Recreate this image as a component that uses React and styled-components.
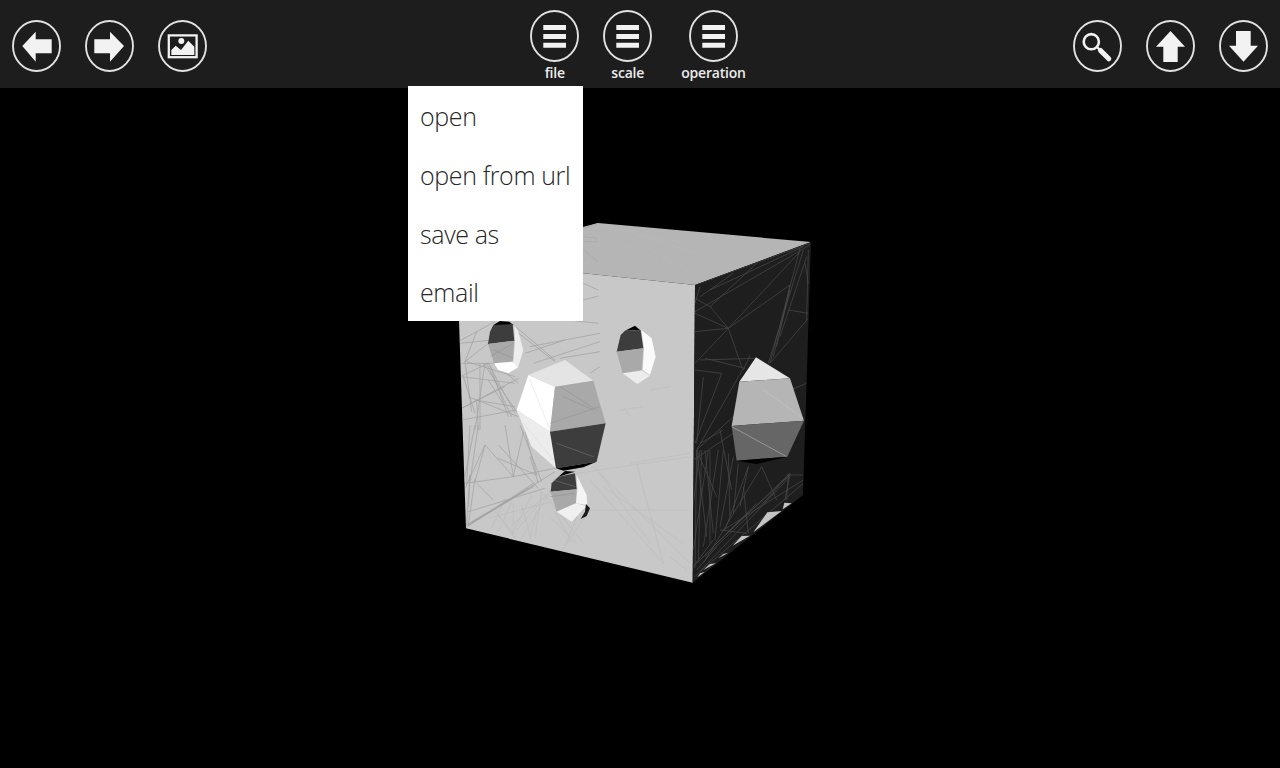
import React from 'react'
import styled, { createGlobalStyle } from 'styled-components'

const GlobalStyle = createGlobalStyle`
    html, body {
        margin: 0;
        background: #000;
        overflow: hidden;
        font-family: "Open Sans", "Liberation Sans", sans-serif;
    }
`

const Page = styled.div`
    position: relative;
    width: 1280px;
    height: 768px;
    background: #000;
    display: flex;
    flex-direction: column;
`

const Toolbar = styled.header`
    height: 88px;
    flex: none;
    box-sizing: border-box;
    padding: 0 12px;
    background: #1d1d1d;
    display: flex;
    justify-content: space-between;
    align-items: flex-start;
`

const SideGroup = styled.div`
    display: flex;
    gap: 24px;
    padding-top: 20px;
`

const CenterGroup = styled.div`
    display: flex;
    gap: 24px;
    padding-top: 10px;
    padding-right: 4px;
`

const RoundButton = styled.button`
    width: 49px;
    height: 52px;
    padding: 0;
    border: 0;
    background: none;
    flex: none;
    svg {
        display: block;
    }
`

const Command = styled.div`
    display: flex;
    flex-direction: column;
    align-items: center;
    min-width: 49px;
    margin-left: ${p => p.$shift || 0}px;
`

const CommandLabel = styled.span`
    font-size: 14px;
    line-height: 20px;
    font-weight: 600;
    letter-spacing: -0.2px;
    color: #ececec;
    white-space: nowrap;
    margin-top: 1px;
`

const Viewport = styled.main`
    flex: 1;
    min-height: 0;
    svg {
        display: block;
    }
`

const Menu = styled.ul`
    position: absolute;
    left: 408px;
    top: 86px;
    width: 175px;
    height: 235px;
    margin: 0;
    padding: 1.4px 0 0;
    box-sizing: border-box;
    list-style: none;
    background: #fff;
`

const MenuItem = styled.li`
    height: 58.7px;
    line-height: 58.7px;
    padding-left: 12px;
    font-size: 25px;
    font-weight: 300;
    letter-spacing: -0.38px;
    color: #262626;
    white-space: nowrap;
`

const Icon = ({ children }) => (
    <svg width="49" height="52" viewBox="0 0 49 52" fill="#f2f2f2">
        <ellipse cx="24.5" cy="26" rx="23.5" ry="25" fill="none" stroke="#e2e2e2" strokeWidth="1.9" />
        {children}
    </svg>
)

const BackIcon = () => <Icon><path d="M10.3 26 23.7 11.7V19.3H39.7V33.3H23.7V41.7Z" /></Icon>
const ForwardIcon = () => <Icon><path d="M39 26 25 11.7V19.3H9.3V33.3H25V41.7Z" /></Icon>
const UpIcon = () => <Icon><path d="M24.5 11 39 26.7H31.7V42H17.3V26.7H10Z" /></Icon>
const DownIcon = () => <Icon><path d="M24.5 41.7 39 25.7H31.7V11H17V25.7H10Z" /></Icon>

const PictureIcon = () => (
    <Icon>
        <rect x="10.8" y="15.4" width="27.8" height="21.8" fill="none" stroke="#f2f2f2" strokeWidth="2.3" />
        <circle cx="23.3" cy="21" r="3" />
        <path d="M13.3 35V30L17.7 25.7 23 30 30.3 20.7 36.3 26.7V35Z" />
    </Icon>
)

const SearchIcon = () => (
    <Icon>
        <circle cx="18.3" cy="21.7" r="7.6" fill="none" stroke="#f2f2f2" strokeWidth="2.6" />
        <path d="M24.5 27.5 27 30" stroke="#f2f2f2" strokeWidth="2.4" />
        <path d="M27.5 30.5 35.8 38.8" stroke="#f2f2f2" strokeWidth="5" strokeLinecap="round" />
    </Icon>
)

const MenuIcon = () => (
    <Icon>
        <path d="M13.3 15H36V20H13.3ZM13.3 24H36V29H13.3ZM13.3 32.7H36V37.7H13.3Z" />
    </Icon>
)

// every coordinate list below is read off a 3x crop of the model, so each one keeps its crop origin
const holes = [
    ['#ffffff', '235,495 315,530 300,665 200,600'],
    ['#ececec', '200,600 300,665 318,775 245,710'],
    ['#e4e4e4', '235,495 345,450 430,512 315,530'],
    ['#a9a9a9', '315,530 430,512 467,640 300,665'],
    ['#3d3d3d', '300,665 467,640 440,755 318,775'],
    ['#000000', '318,775 440,755 400,772 340,782'],
    ['#000000', '130,345 150,333 178,335 190,345'],
    ['#3d3d3d', '120,365 130,345 188,342 193,392 114,402'],
    ['#a9a9a9', '114,402 193,392 188,455 132,460'],
    ['#ededed', '193,345 205,365 220,420 205,470 190,458 195,392'],
    ['#ffffff', '132,460 188,455 205,472 175,490 145,480'],
    ['#000000', '525,362 555,347 570,360'],
    ['#3d3d3d', '512,375 525,362 572,360 580,415 500,425'],
    ['#a9a9a9', '500,425 580,415 575,480 518,490'],
    ['#fafafa', '574,360 605,385 617,440 600,495 578,480 582,415'],
    ['#ececec', '518,490 576,482 600,497 562,522'],
    ['#000000', '325,800 345,783 375,785'],
    ['#3d3d3d', '305,820 325,800 375,790 380,838 302,845'],
    ['#a9a9a9', '302,845 380,838 378,880 320,905'],
    ['#f4f4f4', '380,795 410,855 412,885 378,880 382,838'],
    ['#f0f0f0', '320,905 378,880 410,888 365,935'],
    ['#1a1a1a', '408,882 420,895 410,918 392,927 405,905'],
]

const frontUpper = [
    'M240 410 450 370', 'M250 460 450 395', 'M330 445 450 425', 'M420 490 450 470',
    'M350 330 445 340', 'M400 220 445 240', 'M400 270 445 258',
]

const frontFaint = [
    'M380 790 720 740', 'M430 770 720 1060', 'M420 810 640 1060', 'M400 900 720 900', 'M180 950 400 760',
    'M200 960 330 810', 'M350 1000 420 900', 'M340 1020 410 850', 'M450 790 600 1000', 'M560 760 640 1060',
    'M720 730 540 760', 'M460 830 700 1000', 'M510 600 580 590', 'M520 590 540 620', 'M660 1040 710 1080',
    'M190 970 190 880', 'M240 990 260 900', 'M600 540 660 530', 'M280 850 400 1000', 'M300 920 380 1000',
]

const frontUpperLeft = [
    'M10 65 120 5', 'M15 70 110 60', 'M30 125 100 70', 'M30 125 65 35', 'M30 125 50 275', 'M85 130 185 275',
    'M90 130 60 330', 'M20 265 150 200', 'M20 170 180 190', 'M15 170 100 130', 'M35 125 180 170', 'M120 130 190 190',
    'M170 10 300 120', 'M185 35 300 125', 'M210 100 330 60', 'M20 265 190 175', 'M100 130 180 280', 'M20 300 185 270',
    'M40 230 190 290', 'M75 130 75 330', 'M65 240 70 330', 'M25 170 60 280', 'M100 180 150 260', 'M95 130 170 290',
    'M20 130 120 130', 'M105 135 160 290', 'M60 240 180 260',
]

const frontLowerLeft = [
    'M30 175 175 155 300 130', 'M90 60 175 155', 'M90 60 60 170', 'M150 0 175 155', 'M175 155 205 20', 'M65 175 115 225',
    'M35 305 235 175', 'M35 305 240 180', 'M40 300 300 140', 'M40 245 45 150', 'M25 180 60 0', 'M30 190 90 60',
    'M45 150 35 300', 'M60 160 40 300', 'M40 260 270 190', 'M130 100 245 150', 'M245 150 210 20', 'M250 175 225 95',
    'M195 0 260 170', 'M35 300 220 190', 'M50 290 235 185', 'M45 0 35 180', 'M70 0 45 170', 'M130 60 250 190',
]

const lowerLeftFaint = [
    'M120 260 180 330', 'M170 230 130 320', 'M230 210 170 330', 'M260 200 240 340', 'M100 280 290 230', 'M130 270 180 340',
    'M300 260 350 350', 'M200 240 230 350', 'M150 220 110 310', 'M280 210 200 340',
]

const topLines = [
    'M400 55 445 40', 'M400 80 445 85', 'M400 95 445 95', 'M400 120 445 155', 'M405 65 445 110',
    'M445 45 750 110', 'M420 70 700 170', 'M500 60 745 200', 'M450 120 640 200', 'M560 70 740 130',
]

const sideUpper = [
    'M15 135 360 10', 'M15 215 360 15', 'M60 150 340 20', 'M15 175 60 200 115 265', 'M15 220 115 265', 'M15 275 115 265',
    'M60 200 200 70', 'M115 265 330 35', 'M115 265 300 135', 'M115 265 155 380', 'M15 370 115 265', 'M180 345 160 390',
    'M235 370 340 30', 'M240 370 330 25', 'M260 320 300 135', 'M250 350 300 150', 'M295 210 355 220', 'M240 370 355 235',
    'M355 30 350 240', 'M45 355 165 385', 'M345 70 355 130', 'M30 140 15 190', 'M270 290 350 50', 'M30 170 130 100',
]

const sideMiddle = [
    'M60 390 225 385', 'M45 420 125 430', 'M125 430 45 640', 'M190 415 50 660', 'M50 660 160 560', 'M60 640 130 600',
    'M40 690 190 590', 'M120 600 155 780', 'M50 660 110 800', 'M330 480 380 460', 'M70 440 50 640',
]

const sideLower = [
    'M15 380 300 80', 'M30 365 340 100', 'M40 340 215 50', 'M70 290 300 70', 'M110 250 300 75', 'M100 240 340 90',
    'M60 280 60 0', 'M40 290 85 0', 'M50 260 20 0', 'M70 250 45 0', 'M90 230 130 20', 'M105 240 175 50', 'M130 190 145 40',
    'M150 170 175 50', 'M220 160 300 70', 'M260 150 215 50', 'M285 150 300 70', 'M290 150 295 75', 'M290 75 340 75',
    'M20 340 60 300', 'M15 355 20 0', 'M10 300 55 0', 'M5 200 30 0', 'M25 330 35 0', 'M75 270 100 0', 'M120 200 115 10',
    'M60 300 200 160', 'M45 320 250 130', 'M90 240 170 250', 'M160 110 175 250', 'M20 360 80 290', 'M10 350 70 270',
]

const sideChips = [
    '305,160 283,158 278,178', '275,183 232,187 190,247', '180,257 155,258 128,287',
    '115,308 100,312 85,325', '78,340 60,342 40,360', '45,365 30,370 22,382',
]

const cropStyles = {
    strong: { stroke: '#a0a0a0', strokeWidth: 2.1, fill: 'none' },
    faint: { stroke: '#b9b9b9', strokeWidth: 1.6, fill: 'none' },
    side: { stroke: '#4a4a4a', strokeWidth: 2.1, fill: 'none' },
}

const Crop = ({ x, y, children }) => (
    <g transform={`translate(${x} ${y}) scale(0.3333)`}>{children}</g>
)

const Lines = ({ list, kind }) => list.map((d, i) => <path key={i} d={d} {...cropStyles[kind]} />)

const Cube = () => (
    <svg width="1280" height="680" viewBox="0 88 1280 680">
        <defs>
            <clipPath id="frontFace"><polygon points="457,260 695,285 692.7,582.7 466,528.3" /></clipPath>
            <clipPath id="sideFace"><polygon points="695,285 811,242 803,495 692.7,582.7" /></clipPath>
        </defs>
        <polygon points="457,260 598,223 811,242 695,285" fill="#b5b5b5" />
        <polygon points="457,260 695,285 692.7,582.7 466,528.3" fill="#c8c8c8" />
        <polygon points="695,285 811,242 803,495 692.7,582.7" fill="#1e1e1e" />

        <g clipPath="url(#frontFace)">
            <Crop x={450} y={210}>
                <Lines list={frontFaint} kind="faint" />
                <Lines list={frontUpper} kind="strong" />
            </Crop>
            <Crop x={455} y={425}>
                <Lines list={lowerLeftFaint} kind="faint" />
                <Lines list={frontLowerLeft} kind="strong" />
            </Crop>
            <Crop x={455} y={320}>
                <Lines list={frontUpperLeft} kind="strong" />
            </Crop>
            <Crop x={450} y={210}>
                {holes.map(([color, points], i) => <polygon key={i} points={points} fill={color} />)}
                <path d="M340 560 430 600M330 530 440 600M300 640 450 590M320 700 430 740M120 440 190 400M130 420 190 445M300 860 375 850M310 810 375 830" stroke="#8a8a8a" strokeWidth="1.3" fill="none" />
                <path d="M240 510 300 660M220 640 310 750" stroke="#d4d4d4" strokeWidth="1.3" fill="none" />
            </Crop>
        </g>

        <Crop x={450} y={210}>
            <Lines list={topLines} kind="faint" />
            <path d="M400 55 445 40M400 80 445 85M400 95 445 95M400 120 445 155" stroke="#a0a0a0" strokeWidth="1.6" fill="none" />
        </Crop>

        <g clipPath="url(#sideFace)">
            <Crop x={690} y={240}><Lines list={sideUpper} kind="side" /></Crop>
            <Crop x={680} y={230}><Lines list={sideMiddle} kind="side" /></Crop>
            <Crop x={690} y={450}><Lines list={sideLower} kind="side" /></Crop>
            <Crop x={680} y={230}>
                <polygon points="228,382 178,455 330,445" fill="#e6e6e6" />
                <polygon points="178,455 330,445 372,572 155,588" fill="#b5b5b5" />
                <polygon points="155,588 372,572 322,680 170,692" fill="#666" />
                <polygon points="170,692 322,680 230,702" fill="#000" />
                <path d="M155 590 320 680M250 480 370 565" stroke="#c8c8c8" strokeWidth="1.5" fill="none" />
            </Crop>
            <Crop x={690} y={450}>
                {sideChips.map(points => <polygon key={points} points={points} fill="#c4c4c4" />)}
            </Crop>
        </g>
    </svg>
)

const commands = [
    { label: 'file' },
    { label: 'scale' },
    { label: 'operation', shift: 5 },
]

const menuItems = ['open', 'open from url', 'save as', 'email']

const App = () => {
    return (
        <Page>
            <GlobalStyle />
            <Toolbar>
                <SideGroup>
                    <RoundButton aria-label="back"><BackIcon /></RoundButton>
                    <RoundButton aria-label="forward"><ForwardIcon /></RoundButton>
                    <RoundButton aria-label="picture"><PictureIcon /></RoundButton>
                </SideGroup>
                <CenterGroup>
                    {commands.map(c => (
                        <Command key={c.label} $shift={c.shift}>
                            <RoundButton aria-label={c.label}><MenuIcon /></RoundButton>
                            <CommandLabel>{c.label}</CommandLabel>
                        </Command>
                    ))}
                </CenterGroup>
                <SideGroup>
                    <RoundButton aria-label="search"><SearchIcon /></RoundButton>
                    <RoundButton aria-label="up"><UpIcon /></RoundButton>
                    <RoundButton aria-label="down"><DownIcon /></RoundButton>
                </SideGroup>
            </Toolbar>
            <Viewport>
                <Cube />
            </Viewport>
            <Menu>
                {menuItems.map(item => <MenuItem key={item}>{item}</MenuItem>)}
            </Menu>
        </Page>
    )
}

export default App
